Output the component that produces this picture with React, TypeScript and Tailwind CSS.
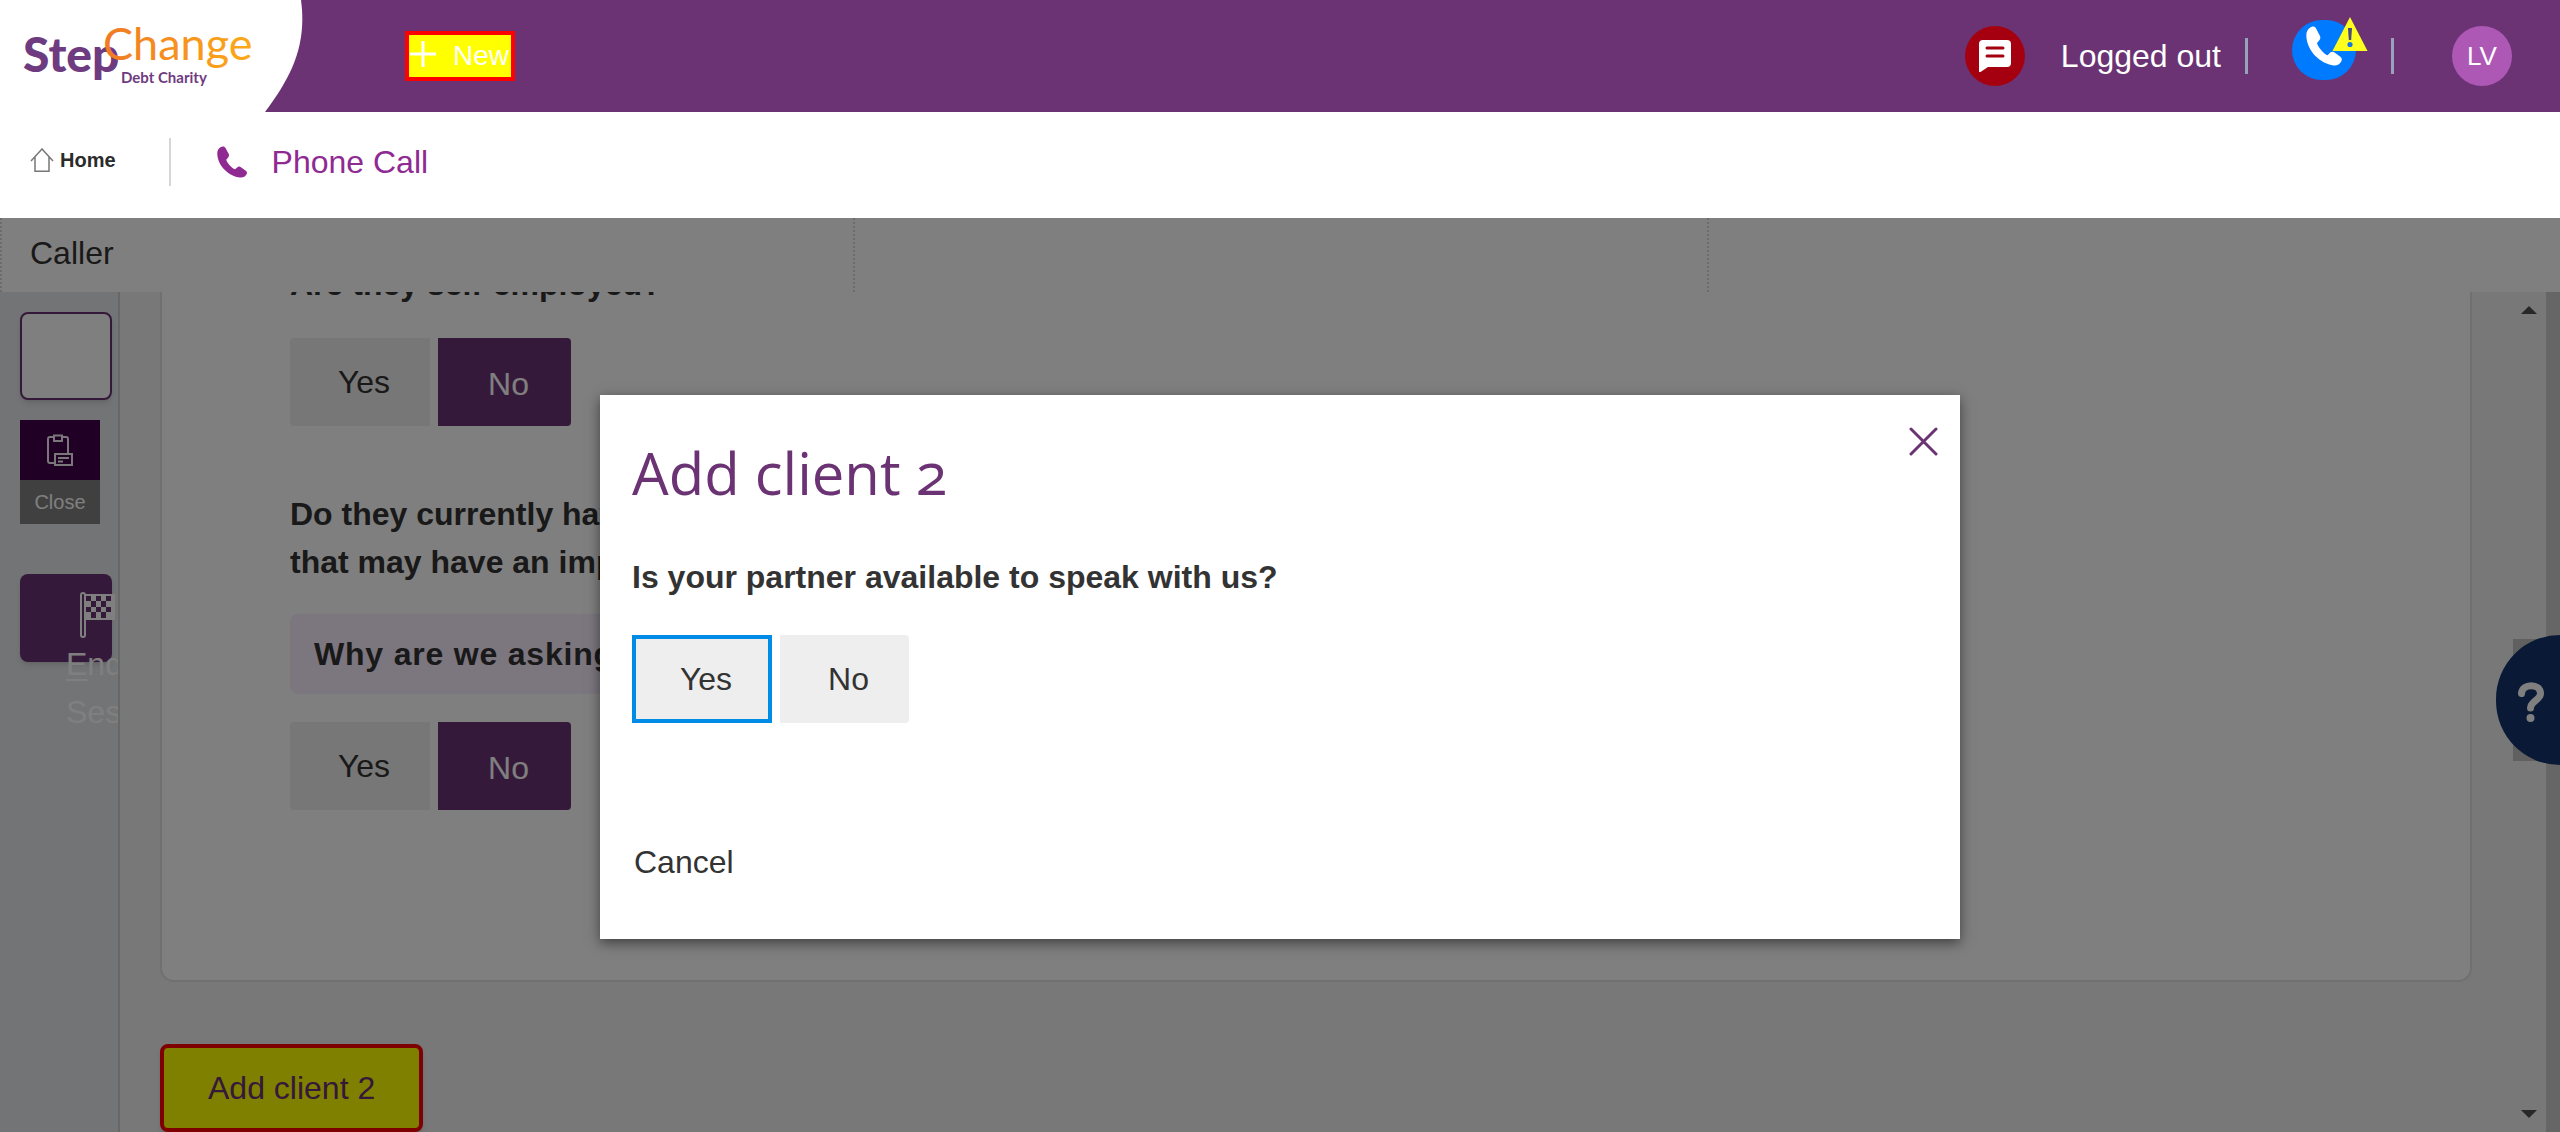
import React from "react";

function Logo() {
  return (
    <svg className="h-28 w-[304px] shrink-0" viewBox="0 0 304 112" role="img" aria-label="StepChange Debt Charity">
      <path d="M0 0H301C307 45 292 76 265 112H0Z" fill="#fff" />
      <defs>
        <linearGradient id="orange" x1="0" x2="1">
          <stop offset="0" stopColor="#f07a22" />
          <stop offset="1" stopColor="#fbaa19" />
        </linearGradient>
      </defs>
      <text x="23" y="72" fontFamily="Lato, sans-serif" fontWeight="900" fontSize="48" fill="#6f3b80">Step</text>
      <text x="103" y="60" fontFamily="Lato, sans-serif" fontSize="45" fill="url(#orange)">Change</text>
      <text x="121" y="83" fontFamily="Lato, sans-serif" fontWeight="700" fontSize="15" fill="#6f3b80">Debt Charity</text>
    </svg>
  );
}

const phonePath =
  "M4 1C1.500 2.500 0 5 .3 9 1 22 12 33 24 34.500c3 .3 5-1 6.500-3.500.8-1.500.6-3-.8-4l-5-3.800c-1.300-1-2.700-.8-3.900.3l-2.200 2C15 24 10.500 18.500 9.500 15l2-2.500c1-1.200 1.200-2.500.5-3.900L8.600 2C7.700.3 5.700 0 4 1Z";

function Phone({ className }: { className: string }) {
  return (
    <svg className={className} viewBox="0 0 32 35" fill="currentColor" preserveAspectRatio="none" aria-hidden="true">
      <path d={phonePath} />
    </svg>
  );
}

function Header() {
  return (
    <header className="flex h-28 items-center bg-[#6b3374] text-white">
      <Logo />
      <button className="ml-[101px] flex h-[50px] w-[110px] items-center border-4 border-[#ff0000] bg-[#ffff00] text-[28px]">
        <svg className="mb-1 h-7 w-7 shrink-0" viewBox="0 0 28 28" stroke="#fff" strokeWidth="3" aria-hidden="true">
          <path d="M14 1v26M1 14h26" />
        </svg>
        <span className="ml-4">New</span>
      </button>
      <div className="ml-auto flex items-center pr-12">
        <button aria-label="Messages" className="flex size-[60px] items-center justify-center rounded-full bg-[#a4000f]">
          <svg className="h-8 w-8" viewBox="0 0 32 32" aria-hidden="true">
            <path d="M4 0H28Q32 0 32 4V23Q32 27 28 27H9L1.500 32H0V4Q0 0 4 0Z" fill="#fff" />
            <path d="M8 8H24M8 16H24" stroke="#a4000f" strokeWidth="3" strokeLinecap="round" />
          </svg>
        </button>
        <span className="ml-9 text-[32px]">Logged out</span>
        <span className="ml-6 h-9 w-[3px] bg-[#97a3bb]" />
        <button aria-label="Call status" className="relative mb-3 ml-11 flex h-[60px] w-16 items-center justify-center rounded-full bg-[#007aff]">
          <Phone className="mb-2 h-10 w-[37px]" />
          <svg className="absolute -top-1 left-10 h-9 w-9" viewBox="0 0 36 36" aria-hidden="true">
            <path d="M18 1 35.500 35H.5Z" fill="#ffff1e" />
            <path d="M16 12h4l-.8 12h-2.400Z" fill="#4a4a80" />
            <circle cx="18" cy="28.500" r="2.600" fill="#1478e0" />
          </svg>
        </button>
        <span className="ml-[35px] h-9 w-[3px] bg-[#97a3bb]" />
        <button aria-label="Profile LV" className="ml-[58px] size-[60px] rounded-full bg-[#ae58b6] text-[26px]">LV</button>
      </div>
    </header>
  );
}

function Crumbs() {
  return (
    <nav className="flex h-[106px] items-center bg-white px-[30px] pb-1.5">
      <a href="#home" className="flex items-center gap-1.5 pb-1 text-[20px] font-bold text-[#2b2b2b]">
        <svg className="h-6 w-6" viewBox="0 0 24 24" fill="none" stroke="#777" strokeWidth="1.500" aria-hidden="true">
          <path d="M1 13 12 1 23 13M5 9V23.200H19V9" />
        </svg>
        Home
      </a>
      <span className="ml-[53px] h-12 w-0.5 bg-[#d6d6d6]" />
      <a href="#phone-call" className="ml-[46px] flex items-center gap-6 text-[32px] text-[#902a93]">
        <Phone className="h-8 w-[31px]" />
        Phone Call
      </a>
    </nav>
  );
}

function YesNo({ name }: { name: string }) {
  return (
    <div role="group" aria-label={name} className="flex gap-2">
      <button className="h-[88px] w-[140px] rounded-l bg-[#eee] pl-2 text-[#333]">Yes</button>
      <button aria-pressed="true" className="h-[88px] w-[133px] rounded-r bg-[#6b3374] pl-2 pt-1 text-white">No</button>
    </div>
  );
}

function Rail() {
  return (
    <aside className="w-[120px] shrink-0 overflow-hidden border-r-2 border-[#cfcfcf] bg-[#e6e8ec] pl-5 pt-5">
      <button aria-label="Panel" className="block h-[88px] w-[92px] rounded-lg border-2 border-[#6b3374] bg-white shadow-md" />
      <button className="mt-5 block w-20 bg-[#808080] text-[20px] text-white">
        <span className="flex h-[60px] items-center justify-center bg-[#400048]">
          <svg className="h-8 w-[26px]" viewBox="0 0 26 32" fill="none" stroke="#f4eef4" strokeWidth="2" aria-hidden="true">
            <path d="M7 3H3Q1 3 1 5V27Q1 29 3 29H7M15 3H19Q21 3 21 5V19" />
            <path d="M7 1.500H15V7H7Z" />
            <path d="M8 20H25V31H8Z" />
            <path d="M11 24H22M11 27.500H16" />
          </svg>
        </span>
        <span className="flex h-11 items-center justify-center">Close</span>
      </button>
      <button className="mt-[50px] flex h-[88px] w-[92px] flex-col rounded-lg bg-[#6b3374] pl-[46px] pt-[18px] text-left leading-[48px] text-white shadow-md">
        <svg className="ml-3.5 h-[46px] w-[35px] shrink-0" viewBox="0 0 35 46" aria-hidden="true">
          <rect x="1" y="1" width="4" height="44" rx="2" fill="none" stroke="#fff" strokeWidth="2" />
          <rect x="5" y="2" width="30" height="26" rx="1" fill="#fff" />
          <path d="M6 4h5v5H6zM16 4h5v5h-5zM26 4h5v5h-5zM11 9h5v6h-5zM21 9h5v6h-5zM6 15h5v5H6zM16 15h5v5h-5zM26 15h5v5h-5zM11 20h5v6h-5zM21 20h5v6h-5z" fill="#6b3374" />
        </svg>
        <span className="mt-0.5 w-32 shrink-0">
          <u className="decoration-2 underline-offset-4">E</u>nd Session
        </span>
      </button>
    </aside>
  );
}

function Form() {
  return (
    <div className="min-w-0 flex-1 overflow-hidden bg-[#f0f0f0] px-10">
      <section className="flow-root h-[690px] rounded-b-[14px] border-2 border-t-0 border-[#e0e0e0] bg-white pl-32 leading-[48px] text-[#333]">
        <h2 className="-mt-8 font-bold">Are they self-employed?</h2>
        <div className="mt-[30px]">
          <YesNo name="Are they self-employed?" />
        </div>
        <h2 className="mt-16 w-[1100px] font-bold">
          Do they currently have any health conditions or circumstances
          <br />
          that may have an impact on their finances?
        </h2>
        <button className="mb-7 mt-7 flex h-20 w-[1100px] items-center rounded-lg bg-[#f8ecff] px-6 font-bold tracking-wide">
          Why are we asking this?
        </button>
        <YesNo name="Conditions affecting finances" />
      </section>
      <button className="mt-[62px] h-[88px] rounded-lg border-4 border-[#ff0000] bg-[#ffff00] px-11 text-[#6b3374] shadow-md">Add client 2</button>
    </div>
  );
}

function Scrollbar() {
  return (
    <div className="flex w-12 shrink-0" aria-hidden="true">
      <div className="flex w-[34px] flex-col items-center bg-[#f1f1f1] py-3.5">
        <span className="h-2 w-4 bg-[#505050] [clip-path:polygon(50%_0,100%_100%,0_100%)]" />
        <span className="mt-[325px] h-[122px] w-8 bg-[#c1c1c1]" />
        <span className="mt-auto h-2 w-4 bg-[#505050] [clip-path:polygon(0_0,100%_0,50%_100%)]" />
      </div>
      <div className="flex-1 bg-[#ccc]" />
    </div>
  );
}

function Dialog() {
  return (
    <div className="absolute inset-0 flex items-center justify-center bg-black/50 pb-4">
      <section
        role="dialog"
        aria-labelledby="dialog-title"
        className="relative w-[1360px] max-w-full bg-white px-8 pb-[53px] pt-[38px] text-[#333] shadow-[0_4px_12px_rgba(0,0,0,0.5)]"
      >
        <button aria-label="Close dialog" className="absolute right-[22px] top-8">
          <svg className="size-[29px]" viewBox="0 0 29 29" stroke="#6b3374" strokeWidth="3" strokeLinecap="round" aria-hidden="true">
            <path d="M2 2 27 27M27 2 2 27" />
          </svg>
        </button>
        <h1 id="dialog-title" className="font-['Open_Sans',sans-serif] text-[58px] leading-[80px] text-[#6b3374] oldstyle-nums">Add client 2</h1>
        <p className="mt-10 font-bold leading-[48px]">Is your partner available to speak with us?</p>
        <div className="mt-[34px] flex gap-2">
          <button className="h-[88px] w-[140px] border-4 border-[#008ce6] bg-[#eee] pl-2">Yes</button>
          <button className="h-[88px] w-[129px] rounded-r bg-[#eee] pl-2">No</button>
        </div>
        <button className="mt-[115px] block h-12 px-0.5">Cancel</button>
      </section>
    </div>
  );
}

export default function App() {
  return (
    <div className="flex h-screen flex-col overflow-hidden font-['Liberation_Sans',Arial,sans-serif]">
      <Header />
      <Crumbs />
      <main className="relative flex min-h-0 flex-1 flex-col text-[32px]">
        <div className="grid h-[74px] shrink-0 grid-cols-3 bg-white text-[#333]">
          <div className="flex items-center border-l-2 border-dotted border-[#d8d8d8] pb-1 pl-7">Caller</div>
          <div className="border-l-2 border-dotted border-[#d8d8d8]" />
          <div className="border-l-2 border-dotted border-[#d8d8d8]" />
        </div>
        <div className="flex min-h-0 flex-1">
          <Rail />
          <Form />
          <Scrollbar />
        </div>
        <button aria-label="Help" className="absolute right-0 top-[417px] flex h-[130px] w-16 items-center rounded-l-full bg-[#14346c] pl-[22px] pt-1 text-white">
          <svg className="h-10 w-[26px]" viewBox="0 0 26 40" fill="none" stroke="#fff" strokeWidth="7" strokeLinecap="round" aria-hidden="true">
            <path d="M3.500 11.500C4 1 22.500 1 22.500 11.500 22.500 18 12.500 19 12.500 26" />
            <circle cx="12.500" cy="36" r="4" fill="#fff" stroke="none" />
          </svg>
        </button>
        <Dialog />
      </main>
    </div>
  );
}
